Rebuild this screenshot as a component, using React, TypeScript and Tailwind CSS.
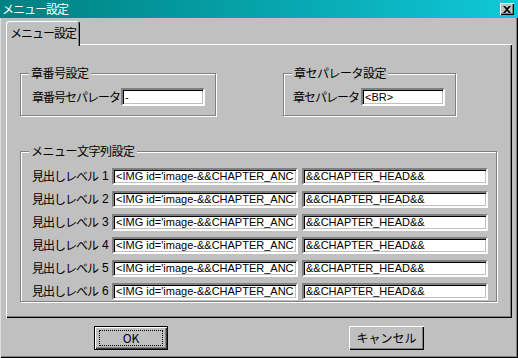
import React from 'react';

const jp = "font-['Noto_Sans_CJK_JP','Liberation_Sans',sans-serif]";
const lat = "font-['Liberation_Sans','Noto_Sans_CJK_JP',sans-serif]";

const sunken =
  'border-2 border-t-[#808080] border-l-[#808080] border-b-white border-r-white shadow-[inset_1px_1px_0_#000,inset_-1px_-1px_0_#c0c0c0] bg-white';

function Field({ value, w, h = 17 }: { value: string; w: string; h?: number }) {
  return (
    <input
      readOnly
      defaultValue={value}
      className={`${sunken} ${lat} ${w} ${h === 18 ? 'h-[18px]' : 'h-[17px]'} px-[2px] text-[11px] leading-none text-black outline-none`}
    />
  );
}

function Group({ title, className, children }: { title: string; className: string; children: React.ReactNode }) {
  return (
    <div className={`relative border border-[#808080] shadow-[1px_1px_0_#fff,inset_1px_1px_0_#fff] ${className}`}>
      <span className={`absolute left-[8px] top-[-9px] bg-[#c0c0c0] px-[2px] text-[12px] leading-[16px] tracking-[-0.5px] ${jp}`}>
        {title}
      </span>
      {children}
    </div>
  );
}

function Button({ label, def }: { label: string; def?: boolean }) {
  return (
    <button
      className={`flex h-[24px] items-center justify-center bg-[#c0c0c0] text-[12px] text-black ${jp} ${
        def
          ? 'w-[74px] border border-black shadow-[inset_1px_1px_0_#fff,inset_-1px_-1px_0_#404040,inset_-2px_-2px_0_#808080]'
          : 'w-[75px] shadow-[inset_1px_1px_0_#fff,inset_-1px_-1px_0_#000,inset_-2px_-2px_0_#808080]'
      }`}
    >
      {def ? (
        <span className="flex h-[16px] w-[64px] items-center justify-center border border-dotted border-black">{label}</span>
      ) : (
        label
      )}
    </button>
  );
}

const levels = [1, 2, 3, 4, 5, 6];

export default function App() {
  return (
    <div className="flex h-[358px] w-[518px] flex-col bg-[#c0c0c0] shadow-[inset_1px_1px_0_#dfdfdf,inset_-1px_-1px_0_#000,inset_-2px_-2px_0_#808080] text-black">
      {/* Title bar */}
      <div className="flex h-[18px] items-center justify-between bg-gradient-to-r from-[#008080] to-[#10c8d8] pl-[2px] pr-[4px]">
        <span className={`text-[12px] leading-none tracking-[-1px] text-white ${jp}`}>メニュー設定</span>
        <button className="flex h-[12px] w-[14px] items-center justify-center bg-[#c0c0c0] shadow-[inset_1px_1px_0_#fff,inset_-1px_-1px_0_#000,inset_-2px_-2px_0_#808080]">
          <svg width="8" height="7" viewBox="0 0 8 7">
            <path d="M0 0h2l2 2 2-2h2L5 3.5 8 7H6L4 5 2 7H0l3-3.5z" fill="#000" />
          </svg>
        </button>
      </div>

      <div className="mx-[6px] mt-[3px] flex flex-col">
        {/* Tab strip */}
        <div className="flex">
          <div
            className={`relative z-10 -mb-[2px] flex h-[25px] w-[74px] items-start justify-center rounded-t-[3px] bg-[#c0c0c0] pt-[4px] text-[12px] leading-[16px] tracking-[-1px] shadow-[inset_1px_1px_0_#fff,inset_-1px_0_0_#000,inset_-2px_0_0_#808080] ${jp}`}
          >
            メニュー設定
          </div>
        </div>

        {/* Panel */}
        <div className="flex h-[274px] flex-col pl-[14px] pt-[29px] shadow-[inset_1px_1px_0_#fff,inset_-1px_-1px_0_#000,inset_-2px_-2px_0_#808080]">
          <div className="flex gap-[67px]">
            <Group title="章番号設定" className="h-[43px] w-[196px]">
              <div className="flex items-center pl-[11px] pt-[14px]">
                <span className={`w-[89px] text-[12px] tracking-[-1px] ${jp}`}>章番号セパレータ</span>
                <Field value="-" w="w-[84px]" h={18} />
              </div>
            </Group>
            <Group title="章セパレータ設定" className="h-[43px] w-[173px]">
              <div className="flex items-center pl-[9px] pt-[14px]">
                <span className={`w-[68px] text-[12px] tracking-[-1px] ${jp}`}>章セパレータ</span>
                <Field value="<BR>" w="w-[84px]" h={18} />
              </div>
            </Group>
          </div>

          <Group title="メニュー文字列設定" className="mt-[35px] h-[151px] w-[477px]">
            <div className="flex flex-col gap-[5px] pl-[11px] pt-[15px]">
              {levels.map((n) => (
                <div key={n} className="flex items-center">
                  <span className={`flex w-[80px] items-center whitespace-nowrap text-[12px] ${jp}`}>
                    <span className="tracking-[-1px]">見出しレベル</span>
                    <span className={`ml-[4px] ${lat}`}>{n}</span>
                  </span>
                  <Field value="<IMG id='image-&&CHAPTER_ANCHOR&&'>" w="w-[186px]" />
                  <div className="w-[4px]" />
                  <Field value="&&CHAPTER_HEAD&&" w="w-[186px]" />
                </div>
              ))}
            </div>
          </Group>
        </div>

        {/* Buttons */}
        <div className="mt-[8px] flex pl-[88px]">
          <Button label="OK" def />
          <div className="w-[181px]" />
          <Button label="キャンセル" />
        </div>
      </div>
    </div>
  );
}
